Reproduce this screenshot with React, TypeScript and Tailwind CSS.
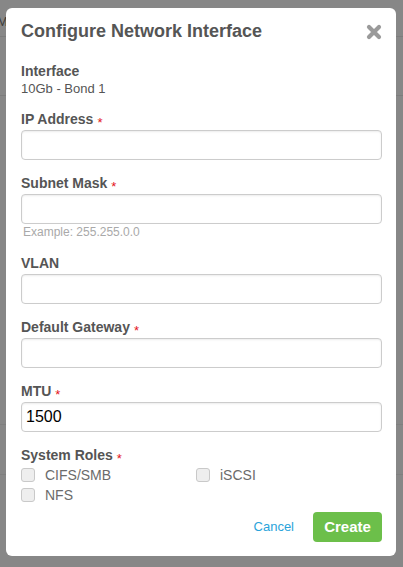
import React from "react";

const fields = [
  { label: "IP Address", required: true, value: "" },
  { label: "Subnet Mask", required: true, value: "", help: "Example: 255.255.0.0" },
  { label: "VLAN", required: false, value: "" },
  { label: "Default Gateway", required: true, value: "" },
  { label: "MTU", required: true, value: "1500" },
];

function Required() {
  return <span className="relative top-[3px] ml-[4px] text-[13px] font-normal leading-none text-[#e4141b]">*</span>;
}

function Checkbox({ label }: { label: string }) {
  return (
    <label className="flex h-[20px] items-center gap-[10px]">
      <span className="h-[14px] w-[14px] rounded-[3px] border border-[#c9c9c9] bg-[#eeeeee]"></span>
      <span className="text-[14px] leading-[20px] text-[#6b6b6b]">{label}</span>
    </label>
  );
}

export default function App() {
  return (
    <div className="relative h-[567px] w-[403px] overflow-hidden bg-[#878787] font-['Liberation_Sans',Arial,sans-serif]">
      {/* page behind the overlay */}
      <div className="flex flex-col">
        <div className="h-[37px] border-b border-[#7c7c7c] pt-[14px] text-[13px] leading-[16px] text-[#3a3a3a]">
          <span className="-ml-[3px]">Mo</span>
        </div>
        <div className="h-[59px] border-b border-[#7c7c7c]"></div>
        <div className="h-[329px] border-b border-[#7f7f7f]"></div>
        <div className="h-[50px] border-b border-[#7f7f7f]"></div>
      </div>

      {/* modal */}
      <div className="absolute left-[6px] top-[8px] flex h-[548px] w-[390px] flex-col rounded-[6px] bg-white pl-[15px] pr-[14px] pt-[13px] pb-[14px]">
        <div className="flex items-start justify-between">
          <h1 className="text-[18px] font-bold leading-[20px] text-[#555555]">Configure Network Interface</h1>
          <svg viewBox="0 0 16 16" className="mt-[3px] h-[16px] w-[16px]">
            <path d="M3 3 L13 13 M13 3 L3 13" stroke="#9a9a9a" strokeWidth="4.2" strokeLinecap="round" fill="none" />
          </svg>
        </div>

        <div className="mt-[21px] text-[14px] font-bold leading-[18px] text-[#555555]">Interface</div>
        <div className="text-[13px] leading-[17px] text-[#555555]">10Gb - Bond 1</div>

        <div className="mt-[13px] flex flex-col gap-[14px]">
          {fields.map((f) => (
            <div key={f.label} className="flex flex-col">
              <div className="mb-[2px] h-[18px] text-[14px] font-bold leading-[18px] text-[#555555]">
                {f.label}
                {f.required && <Required />}
              </div>
              <div className="flex h-[30px] items-center rounded-[4px] border border-[#cccccc] px-[4px] shadow-[inset_0_1px_2px_rgba(0,0,0,0.08)]">
                <span className="text-[16px] text-black">{f.value}</span>
              </div>
              {f.help && (
                <div className="mt-[1px] h-[15px] pl-[2px] text-[12px] leading-[15px] text-[#a9a9a9]">{f.help}</div>
              )}
            </div>
          ))}

          <div className="flex flex-col">
            <div className="h-[18px] text-[14px] font-bold leading-[18px] text-[#555555]">
              System Roles
              <Required />
            </div>
            <div className="mt-[1px] grid grid-cols-[175px_1fr]">
              <Checkbox label="CIFS/SMB" />
              <Checkbox label="iSCSI" />
              <Checkbox label="NFS" />
            </div>
          </div>
        </div>

        <div className="mt-[7px] flex items-center justify-end">
          <span className="mr-[19px] text-[13px] text-[#2aa3da]">Cancel</span>
          <button className="h-[30px] w-[69px] rounded-[4px] bg-[#6cbf4a] text-center text-[15px] font-bold text-white">
            Create
          </button>
        </div>
      </div>
    </div>
  );
}
